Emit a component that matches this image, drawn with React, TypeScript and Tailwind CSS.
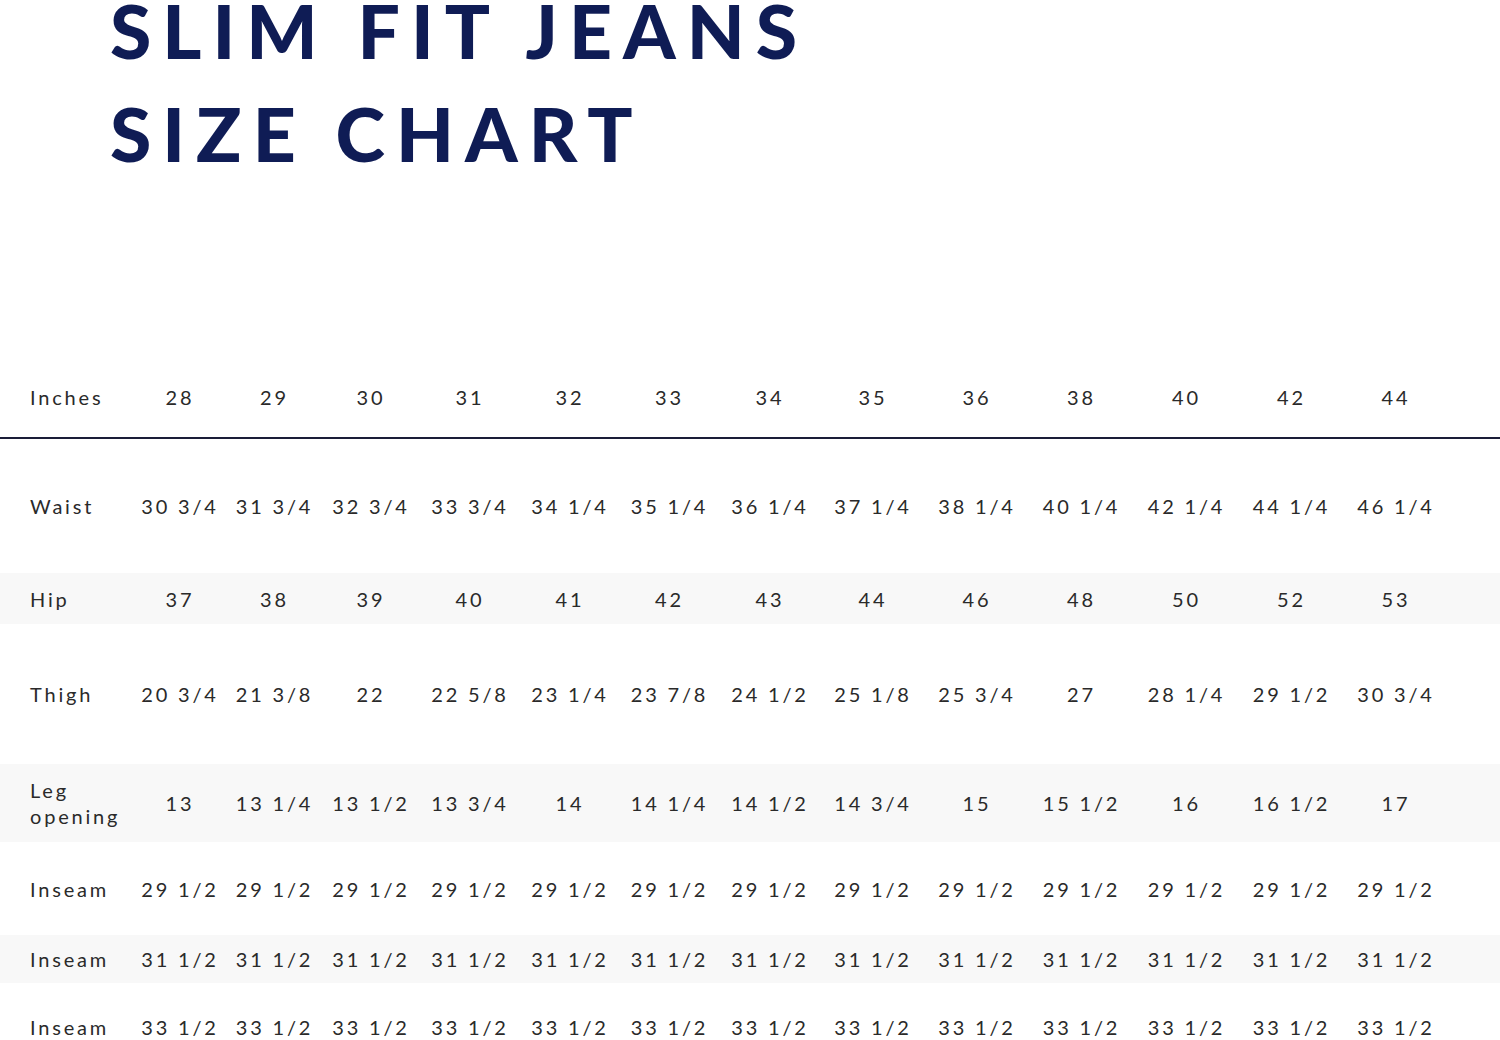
const SIZES = ['28', '29', '30', '31', '32', '33', '34', '35', '36', '38', '40', '42', '44']

type Row = {
  label: string[]
  values: string[]
  height: string
  shaded: boolean
}

const ROWS: Row[] = [
  {
    label: ['Waist'],
    values: ['30 3/4', '31 3/4', '32 3/4', '33 3/4', '34 1/4', '35 1/4', '36 1/4', '37 1/4', '38 1/4', '40 1/4', '42 1/4', '44 1/4', '46 1/4'],
    height: 'h-[134px]',
    shaded: false,
  },
  {
    label: ['Hip'],
    values: ['37', '38', '39', '40', '41', '42', '43', '44', '46', '48', '50', '52', '53'],
    height: 'h-[51px]',
    shaded: true,
  },
  {
    label: ['Thigh'],
    values: ['20 3/4', '21 3/8', '22', '22 5/8', '23 1/4', '23 7/8', '24 1/2', '25 1/8', '25 3/4', '27', '28 1/4', '29 1/2', '30 3/4'],
    height: 'h-[140px]',
    shaded: false,
  },
  {
    label: ['Leg', 'opening'],
    values: ['13', '13 1/4', '13 1/2', '13 3/4', '14', '14 1/4', '14 1/2', '14 3/4', '15', '15 1/2', '16', '16 1/2', '17'],
    height: 'h-[78px]',
    shaded: true,
  },
  {
    label: ['Inseam'],
    values: Array(13).fill('29 1/2'),
    height: 'h-[93px]',
    shaded: false,
  },
  {
    label: ['Inseam'],
    values: Array(13).fill('31 1/2'),
    height: 'h-[48px]',
    shaded: true,
  },
  {
    label: ['Inseam'],
    values: Array(13).fill('33 1/2'),
    height: 'h-[87px]',
    shaded: false,
  },
]

// column widths follow the picture, not an even split
const GRID =
  'grid grid-cols-[133px_94px_95px_98px_100px_100px_99px_102px_104px_104px_105px_105px_105px_104px_1fr]'

function Cells({ values }: { values: string[] }) {
  return (
    <>
      {values.map((v, i) => (
        <div key={i} className="text-center whitespace-nowrap">
          {v}
        </div>
      ))}
      <div />
    </>
  )
}

export default function App() {
  return (
    <div className="w-[1500px] h-[1040px] overflow-hidden bg-white font-['Lato','Liberation_Sans',sans-serif]">
      <div className="h-[370px] pl-[110px] flex flex-col">
        <h1 className="-mt-[21px] text-[75px] leading-[103px] font-black tracking-[0.147em] text-[#0f1c55]">
          <div>SLIM FIT JEANS</div>
          <div>SIZE CHART</div>
        </h1>
      </div>

      <div className="text-[20px] tracking-[0.14em] text-[#2a2a2a]">
        <div className={`${GRID} h-[69px] pb-[13px] items-center border-b-2 border-[#1a1d38]`}>
          <div className="pl-[30px]">Inches</div>
          <Cells values={SIZES} />
        </div>

        {ROWS.map((row, i) => (
          <div
            key={i}
            className={`${GRID} ${row.height} items-center ${row.shaded ? 'bg-[#f8f8f8]' : 'bg-white'}`}
          >
            <div className="pl-[30px] leading-[26px]">
              {row.label.map((l) => (
                <div key={l}>{l}</div>
              ))}
            </div>
            <Cells values={row.values} />
          </div>
        ))}
      </div>
    </div>
  )
}
